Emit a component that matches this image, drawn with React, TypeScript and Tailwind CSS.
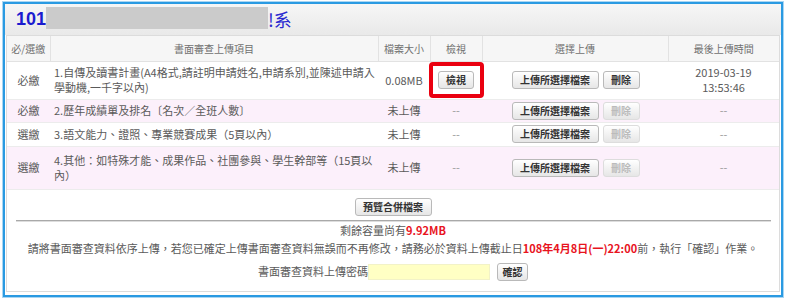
import React from "react";

const font = { fontFamily: '"Noto Sans CJK TC", "Liberation Sans", sans-serif' };

type Row = {
  need: string;
  item: React.ReactNode;
  size: string;
  uploaded: boolean;
  time?: [string, string];
  pink: boolean;
  h: string;
};

const rows: Row[] = [
  {
    need: "必繳",
    item: (
      <>
        1.自傳及讀書計畫(A4格式,請註明申請姓名,申請系別,並陳述申請入
        <br />
        學動機,一千字以內)
      </>
    ),
    size: "0.08MB",
    uploaded: true,
    time: ["2019-03-19", "13:53:46"],
    pink: false,
    h: "h-[38px]",
  },
  {
    need: "必繳",
    item: "2.歷年成績單及排名〔名次／全班人數〕",
    size: "未上傳",
    uploaded: false,
    pink: true,
    h: "h-[23px]",
  },
  {
    need: "選繳",
    item: "3.語文能力、證照、專業競賽成果（5頁以內）",
    size: "未上傳",
    uploaded: false,
    pink: false,
    h: "h-[24px]",
  },
  {
    need: "選繳",
    item: (
      <>
        4.其他：如特殊才能、成果作品、社團參與、學生幹部等（15頁以
        <br />
        內）
      </>
    ),
    size: "未上傳",
    uploaded: false,
    pink: true,
    h: "h-[43px]",
  },
];

const Btn: React.FC<{ children: React.ReactNode; disabled?: boolean; className?: string }> = ({
  children,
  disabled,
  className = "",
}) => (
  <span
    className={`inline-flex h-[18px] items-center justify-center rounded-[3px] border bg-gradient-to-b from-white to-[#e6e6e6] text-[10px] font-bold leading-none ${
      disabled ? "border-[#dddddd] text-[#bbbbbb]" : "border-[#b9b9b9] text-[#333333]"
    } ${className}`}
  >
    {children}
  </span>
);

export default function App() {
  return (
    <div className="h-[302px] w-[786px] bg-white pl-[3px] pt-[2px]" style={font}>
      <div className="h-[295px] w-[780px] border-2 border-[#2a9ae2] shadow-[0_0_0_1px_#a9d6f3]">
        <div className="flex h-[31px] items-center bg-gradient-to-b from-[#f6f6f6] to-[#e9e9e9] pl-[11px]">
          <span className="text-[18px] font-bold text-[#1b1bcf]" style={{ fontFamily: '"Liberation Sans", sans-serif' }}>
            101
          </span>
          <span className="mb-[3px] h-[22px] w-[222px] bg-[#cbcbcb]" />
          <span className="text-[18px] text-[#2a2ad0]">!系</span>
        </div>
        <div className="mx-[1px] h-[257px] border border-[#dcdcdc] bg-white">
          <table className="w-full table-fixed border-collapse text-[11px] text-[#5a5a5a]">
            <colgroup>
              <col className="w-[43px]" />
              <col className="w-[328px]" />
              <col className="w-[52px]" />
              <col className="w-[52px]" />
              <col className="w-[186px]" />
              <col />
            </colgroup>
            <thead>
              <tr className="h-[25px] bg-[#f6f6f6] text-[10px] text-[#707070]">
                {["必/選繳", "書面審查上傳項目", "檔案大小", "檢視", "選擇上傳", "最後上傳時間"].map((t, i) => (
                  <th
                    key={i}
                    className={`border-b border-[#e2e2e2] font-normal ${i < 5 ? "border-r" : ""} border-r-[#e2e2e2]`}
                  >
                    {t}
                  </th>
                ))}
              </tr>
            </thead>
            <tbody>
              {rows.map((r, i) => (
                <tr key={i} className={`${r.h} border-b border-[#ececec] ${r.pink ? "bg-[#fcf0fb]" : "bg-white"}`}>
                  <td className="text-center">{r.need}</td>
                  <td className="pl-[4px] leading-[15px]">{r.item}</td>
                  <td className="text-center">{r.size}</td>
                  <td className="relative text-center">
                    {r.uploaded ? (
                      <>
                        <div className="absolute -left-[1px] top-0 h-[36px] w-[55px] rounded-[4px] border-[4px] border-[#ea0010]" />
                        <Btn className="w-[36px]">檢視</Btn>
                      </>
                    ) : (
                      <span className="text-[#999999]">--</span>
                    )}
                  </td>
                  <td>
                    <div className="flex justify-center gap-[4px] pl-[1px]">
                      <Btn className="w-[87px]">上傳所選擇檔案</Btn>
                      <Btn className="w-[37px]" disabled={!r.uploaded}>
                        刪除
                      </Btn>
                    </div>
                  </td>
                  <td className="text-center leading-[15px]">
                    {r.time ? (
                      <>
                        {r.time[0]}
                        <br />
                        {r.time[1]}
                      </>
                    ) : (
                      <span className="text-[#999999]">--</span>
                    )}
                  </td>
                </tr>
              ))}
            </tbody>
          </table>
          <div className="flex flex-col items-center text-[11px] text-[#5a5a5a]">
            <div className="flex h-[32px] w-full flex-col items-center justify-end">
              <Btn className="w-[77px]">預覽合併檔案</Btn>
              <div className="mt-[4px] h-[2px] w-[755px] border-t border-[#a9a9a9] bg-[#dddddd]" />
            </div>
            <div className="mt-[1px] leading-[14px]">
              剩餘容量尚有<span className="font-bold text-[#e8141e]">9.92MB</span>
            </div>
            <div className="mt-[4px] leading-[14px]">
              請將書面審查資料依序上傳，若您已確定上傳書面審查資料無誤而不再修改，請務必於資料上傳截止日
              <span className="font-bold text-[#e8141e]">108年4月8日(一)22:00</span>前，執行「確認」作業。
            </div>
            <div className="mt-[8px] flex items-center">
              <span>書面審查資料上傳密碼</span>
              <span className="h-[16px] w-[122px] border border-[#f2f2c8] bg-[#ffffc4]" />
              <Btn className="ml-[7px] w-[31px]">確認</Btn>
            </div>
          </div>
        </div>
      </div>
    </div>
  );
}
